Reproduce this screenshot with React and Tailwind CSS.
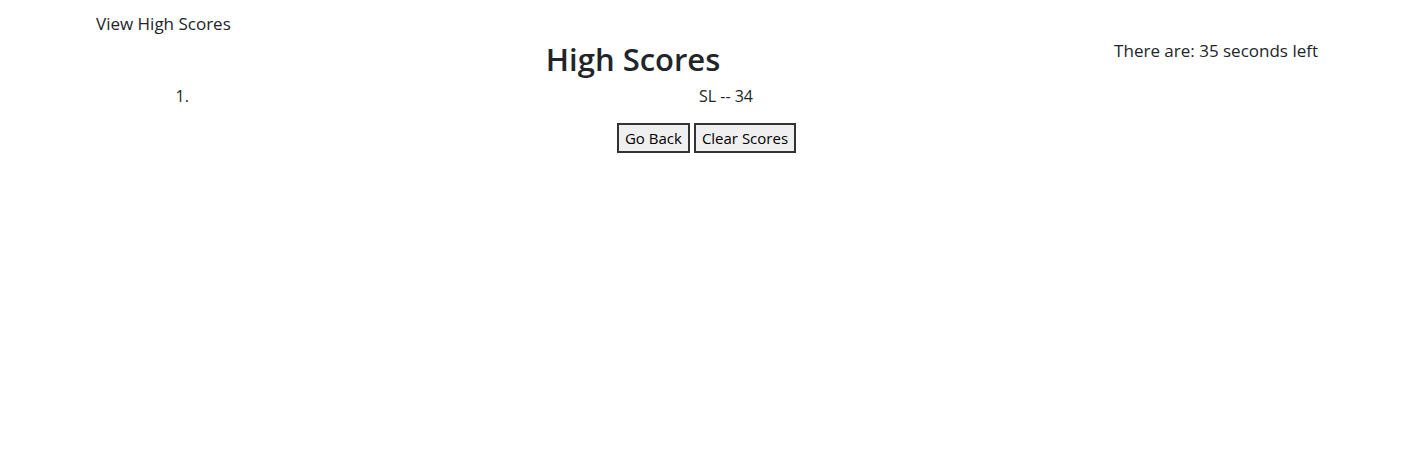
export default function App() {
  return (
    <div className="min-h-screen bg-white text-[#212529] font-['Open_Sans',sans-serif] text-[17px]">
      {/* Nav */}
      <div className="px-[96px] pt-[12px] leading-[24px]">
        <span>View High Scores</span>
      </div>

      {/* Header row */}
      <div className="flex items-start pl-[96px] pr-[95px]">
        <div className="flex-1 text-center pl-[56px]">
          <h1 className="text-[31px] font-semibold leading-[38px] pt-[4px]">High Scores</h1>
        </div>
        <div className="pt-[3px] leading-[24px]">There are: 35 seconds left</div>
      </div>

      {/* Scores */}
      <ol className="list-decimal ml-[193px] mr-[154px] mt-[6px] text-center leading-[24px] text-[16px]">
        <li>SL -- 34</li>
      </ol>

      {/* Buttons */}
      <div className="flex justify-center gap-[4px] mt-[15px]">
        <button className="h-[30px] px-[6px] bg-[#efefef] border-2 border-[#333] text-[15px] leading-[20px] text-black">Go Back</button>
        <button className="h-[30px] px-[6px] bg-[#efefef] border-2 border-[#333] text-[15px] leading-[20px] text-black">Clear Scores</button>
      </div>
    </div>
  );
}
